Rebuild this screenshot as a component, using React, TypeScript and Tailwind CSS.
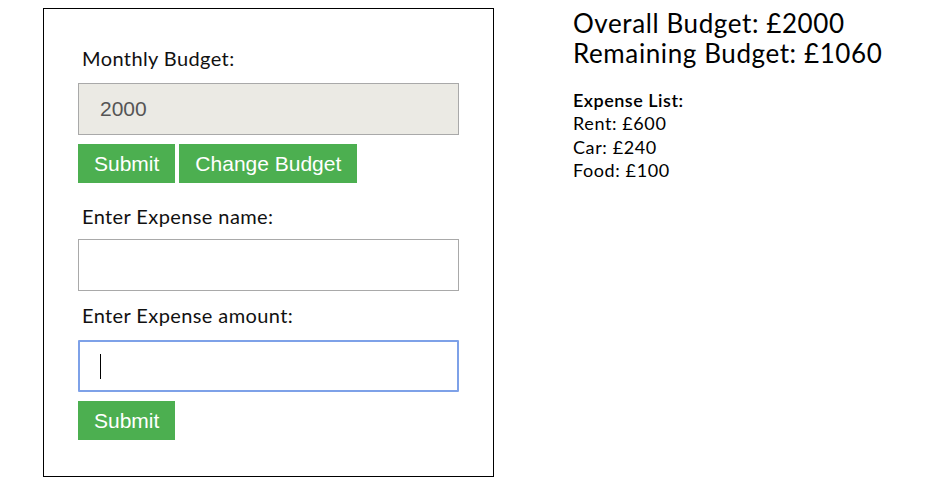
const expenses = [
  { name: 'Rent', amount: 600 },
  { name: 'Car', amount: 240 },
  { name: 'Food', amount: 100 },
]

const font = "font-['Lato','Noto_Sans',sans-serif]"
const btn =
  "bg-[#4caf50] px-4 h-[39px] font-['Liberation_Sans',Arial,sans-serif] text-[21px] text-white"
const label = 'pl-[4px] text-[20px] leading-[24px] tracking-[0.4px] text-[#111]'

export default function App() {
  return (
    <div className={`flex items-start gap-[79px] pt-2 pl-[43px] text-black ${font}`}>
      {/* form box */}
      <div className="flex w-[451px] flex-col border border-black px-[34px] pt-[37px] pb-[36px]">
        <label className={label}>Monthly Budget:</label>
        <div className="mt-[13px] flex h-[52px] items-center border border-[#a9a9a9] bg-[#ebeae4] px-[21px] font-['Liberation_Sans',Arial,sans-serif] text-[21px] text-[#555]">
          2000
        </div>
        <div className="mt-[9px] flex gap-1">
          <button className={btn}>Submit</button>
          <button className={btn}>Change Budget</button>
        </div>

        <label className={`mt-[21px] ${label}`}>Enter Expense name:</label>
        <div className="mt-[11px] h-[52px] border border-[#a9a9a9] bg-white" />

        <label className={`mt-[12px] ${label}`}>Enter Expense amount:</label>
        <div className="relative mt-[13px] h-[52px] rounded-[1px] border-2 border-[#7ea1e8] bg-white">
          <span className="absolute left-[20px] top-[12px] h-[25px] w-px bg-black" />
        </div>
        <div className="mt-[9px] flex">
          <button className={btn}>Submit</button>
        </div>
      </div>

      {/* summary */}
      <div className="flex flex-col">
        <div className="text-[26px] leading-[30px] tracking-[0.6px]">Overall Budget: £2000</div>
        <div className="text-[26px] leading-[30px] tracking-[0.6px]">Remaining Budget: £1060</div>
        <div className="mt-5 text-[18px] font-semibold leading-[24px] tracking-[0.5px]">
          Expense List:
        </div>
        {expenses.map((e) => (
          <div key={e.name} className="text-[18px] leading-[23.5px] tracking-[0.6px]">
            {e.name}: £{e.amount}
          </div>
        ))}
      </div>
    </div>
  )
}
